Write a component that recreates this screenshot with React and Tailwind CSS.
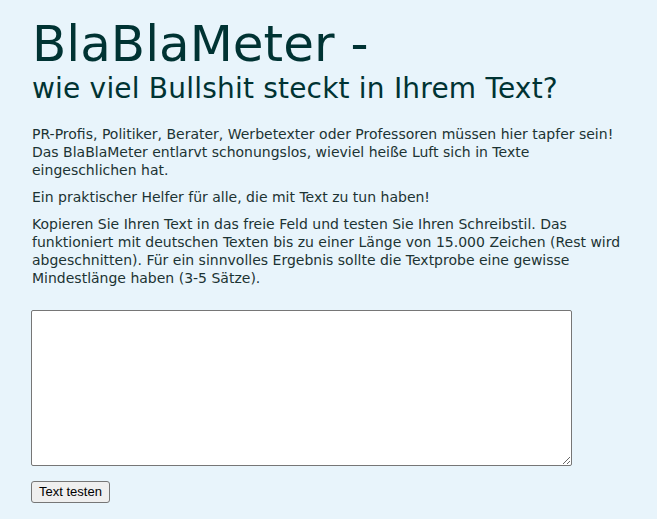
export default function App() {
  return (
    <div className="min-h-screen bg-[#e8f4fb] px-8 pt-[16px] font-['DejaVu_Sans',Verdana,sans-serif] text-[#1c3333]">
      <h1 className="text-[50px] leading-[56px] text-[#003333]">BlaBlaMeter -</h1>
      <h2 className="text-[28px] leading-[33px] tracking-[0.2px] text-[#003333]">
        wie viel Bullshit steckt in Ihrem Text?
      </h2>

      <div className="mt-[20px] text-[14px] leading-[18px] space-y-[9px] max-w-[600px]">
        <p>
          PR-Profis, Politiker, Berater, Werbetexter oder Professoren müssen hier tapfer sein! Das BlaBlaMeter
          entlarvt schonungslos, wieviel heiße Luft sich in Texte eingeschlichen hat.
        </p>
        <p>Ein praktischer Helfer für alle, die mit Text zu tun haben!</p>
        <p>
          Kopieren Sie Ihren Text in das freie Feld und testen Sie Ihren Schreibstil. Das funktioniert mit
          deutschen Texten bis zu einer Länge von 15.000 Zeichen (Rest wird abgeschnitten). Für ein sinnvolles
          Ergebnis sollte die Textprobe eine gewisse Mindestlänge haben (3-5 Sätze).
        </p>
      </div>

      <form className="mt-[23px] flex flex-col items-start" onSubmit={(e) => e.preventDefault()}>
        <textarea className="block w-[541px] h-[156px] -ml-px bg-white border border-[#767676] rounded-[2px] resize-y" />
        <button
          type="submit"
          className="mt-[15px] -ml-px px-[7px] h-[22px] text-[13px] font-['Liberation_Sans',Arial,sans-serif] text-black bg-[#efefef] border border-[#767676] rounded-[3px]"
        >
          Text testen
        </button>
      </form>
    </div>
  )
}
